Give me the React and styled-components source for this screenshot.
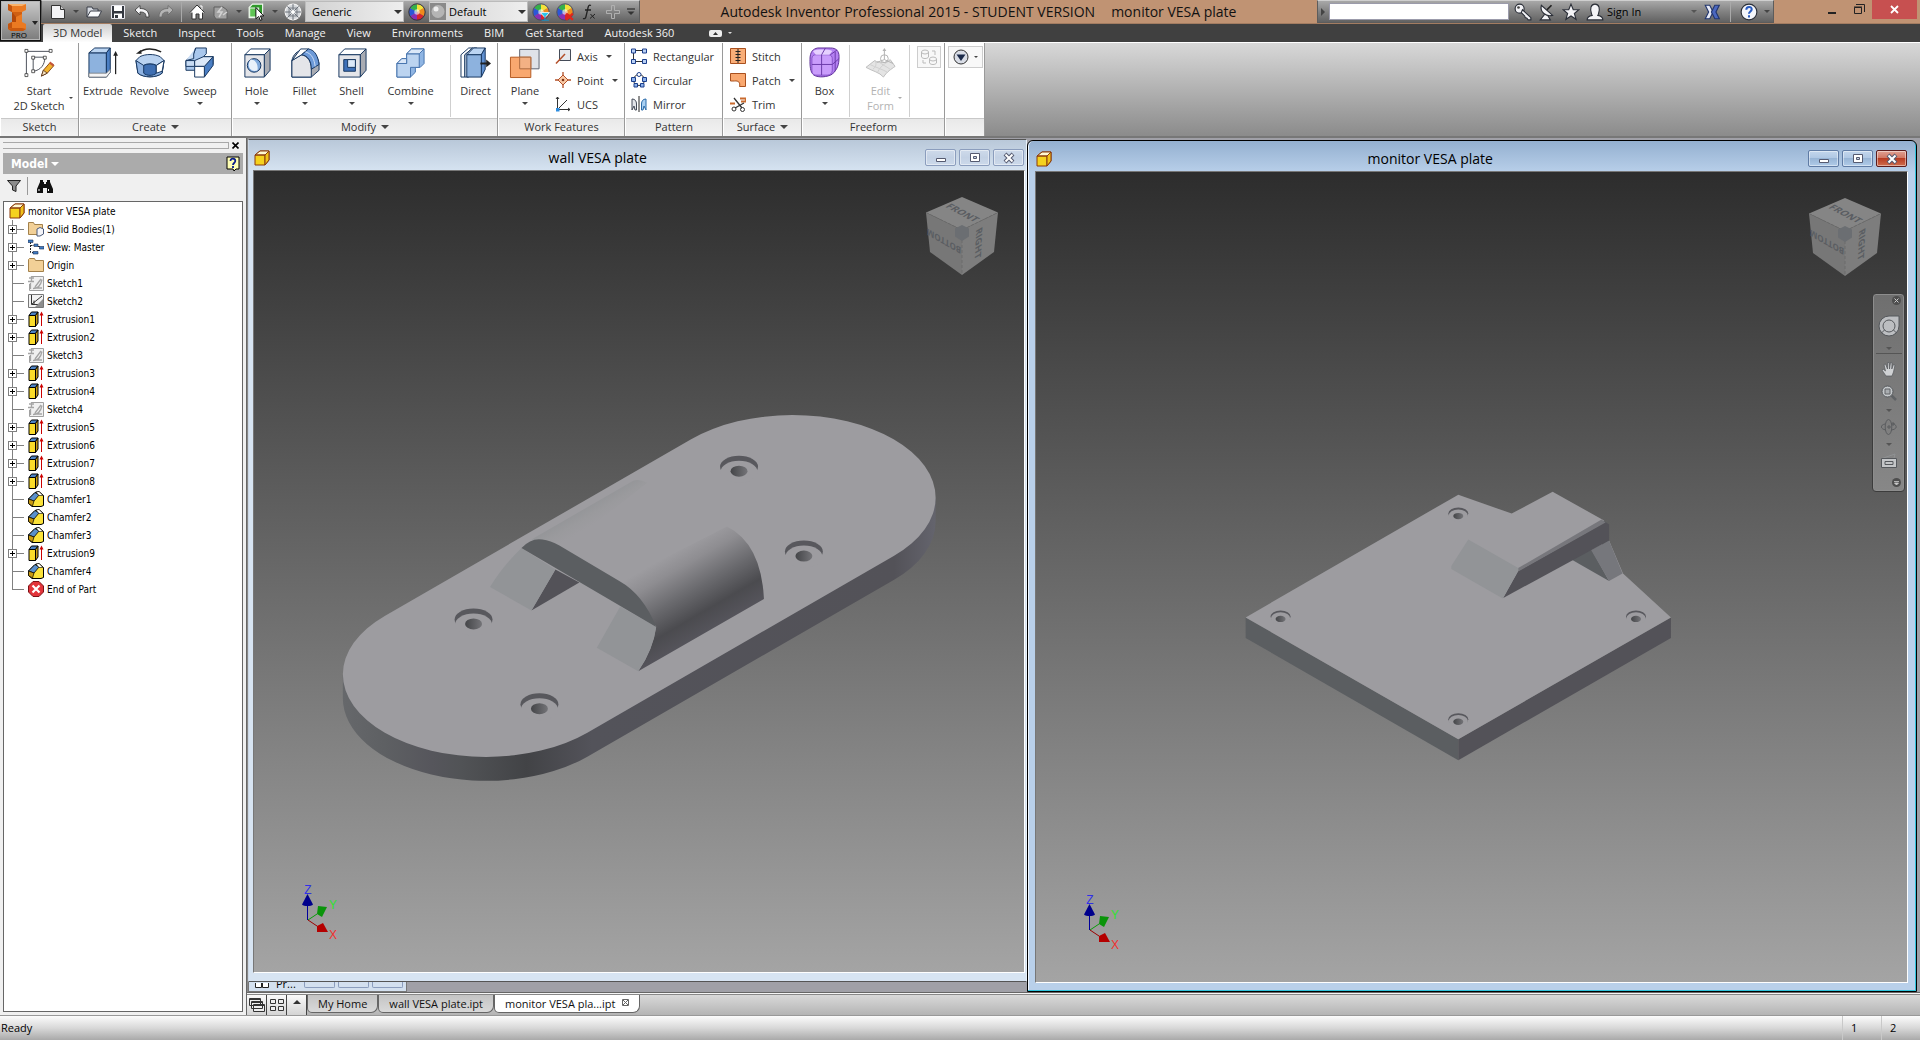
import React, { Component } from 'react';
import styled, { createGlobalStyle, css } from 'styled-components'

const uiFont = `"Open Sans", "Noto Sans", sans-serif`
const treeFont = `"DejaVu Sans Condensed", "DejaVu Sans", sans-serif`

const GlobalStyle = createGlobalStyle`
* { box-sizing: border-box; }
body {
  margin: 0;
  overflow: hidden;
  font-family: ${uiFont};
  font-size: 11px;
  color: #333;
}
button, select, input {
  font: inherit;
  color: inherit;
  margin: 0;
}
button {
  border: 0;
  padding: 0;
  background: none;
}
svg { display: block; flex: none; }
`

const Page = styled.div`
display: flex;
flex-direction: column;
min-height: 100vh;
background: #f0f0f0;
`

// ============================ header ============================

const Header = styled.header`
display: flex;
height: 42px;
background: #404040;
`

const AppButton = styled.button`
width: 41px;
height: 41px;
border: 1px solid #111;
background: linear-gradient(#c9c9c9, #a2a2a2 50%, #7c7c7c);
box-shadow: inset 0 0 0 1px #b5b5b5;
`

const HeaderRows = styled.div`
flex: 1;
min-width: 0;
`

const TitleBar = styled.div`
display: flex;
height: 24px;
background: #c09373;
border-bottom: 1px solid #a37c61;
`

const bevel = css`
background: linear-gradient(#a8a8a8, #828282 50%, #626262);
border: 1px solid #5c5c5c;
border-top-color: #cfcfcf;
`

const QuickAccess = styled.div`
${bevel}
display: flex;
align-items: center;
width: 599px;
padding-left: 4px;
`

const QuickButton = styled.button`
display: flex;
align-items: center;
justify-content: center;
flex: none;
width: ${props => props.$narrow ? 12 : 24}px;
height: 22px;
`

const QuickLine = styled.div`
width: 1px;
height: 20px;
margin: 0 ${props => props.$wide ? 6 : 3}px;
background: #a9a9a9;
`

const ComboBox = styled.label`
position: relative;
display: flex;
align-items: center;
flex: none;
width: 99px;
height: 21px;
margin-right: 1px;
background: linear-gradient(90deg, #d2d2d2, #eee);
border: 1px solid #bbb;
select {
  flex: 1;
  width: 100%;
  height: 19px;
  padding: 0 0 0 ${props => props.$swatch ? 3 : 6}px;
  appearance: none;
  border: 0;
  background: none;
  color: #000;
}
svg.arrow {
  position: absolute;
  right: 1px;
  pointer-events: none;
}
`

const AppTitle = styled.div`
flex: 1;
display: flex;
align-items: center;
justify-content: center;
gap: 16px;
font-size: 14px;
color: #111;
white-space: nowrap;
`

const InfoCenter = styled.div`
${bevel}
display: flex;
align-items: center;
width: 457px;
padding-left: 1px;
color: #000;
`

const SearchBox = styled.input`
width: 180px;
height: 17px;
margin: 0 2px 0 1px;
border: 1px solid #9b9bab;
background: #fff;
`

const SignIn = styled.button`
display: flex;
align-items: center;
justify-content: space-between;
width: 90px;
height: 22px;
margin-right: 3px;
`

const WindowButtons = styled.div`
display: flex;
justify-content: flex-end;
width: 146px;
padding-right: 3px;
`

const WindowButton = styled.button`
display: flex;
align-items: center;
justify-content: center;
width: 27px;
height: 19px;
`

const CloseButton = styled(WindowButton)`
width: 45px;
background: #c75050;
`

const TabRow = styled.nav`
display: flex;
gap: 1px;
height: 18px;
padding-left: 2px;
align-items: stretch;
`

const RibbonTab = styled.a`
padding: 0 10px;
line-height: 17px;
color: ${props => props.$active ? '#333' : '#f2f2f2'};
background: ${props => props.$active ? 'linear-gradient(#cfcfcf, #fdfdfd)' : 'none'};
border-radius: 2px 2px 0 0;
text-decoration: none;
white-space: nowrap;
`

const TabTools = styled.button`
display: flex;
align-items: center;
gap: 6px;
margin-left: 24px;
`

// ============================ ribbon ============================

const Ribbon = styled.section`
display: flex;
height: 94px;
border-top: 1px solid #fff;
background: linear-gradient(#d8d8d8, #8b8b8b);
`

const Panel = styled.div`
display: flex;
flex-direction: column;
width: ${props => props.$width}px;
background: #fff;
border-right: 1px solid #9a9a9a;
`

const PanelBody = styled.div`
display: flex;
flex: 1;
padding-left: ${props => props.$indent || 0}px;
`

const PanelTitle = styled.div`
display: flex;
align-items: center;
justify-content: center;
gap: 5px;
height: 18px;
margin-left: 1px;
padding-bottom: 2px;
border-top: 1px solid #c8c8c8;
background: linear-gradient(#e9e9e9, #f3f3f3);
line-height: 15px;
`

const BigTool = styled.button`
display: flex;
flex-direction: column;
align-items: center;
gap: 4px;
width: ${props => props.$width}px;
padding-top: 4px;
color: ${props => props.disabled ? '#b3b3b3' : 'inherit'};
`

const BigLabel = styled.span`
display: flex;
align-items: center;
gap: 4px;
padding-left: ${props => props.$side ? 8 : 0}px;
line-height: 15px;
`

const SmallTools = styled.div`
display: flex;
flex-direction: column;
padding-top: 1px;
`

const SmallTool = styled.button`
display: flex;
align-items: center;
gap: 6px;
height: 24px;
svg + span { margin-right: 2px; }
`

const ToolLine = styled.div`
width: 1px;
height: 72px;
margin: 2px ${props => props.$gap || 0}px 0;
background: #cfcfcf;
`

const BoxTool = styled.button`
display: flex;
align-items: center;
justify-content: center;
gap: 5px;
width: ${props => props.$width}px;
height: 22px;
margin: 3px 0 0 ${props => props.$left}px;
border: 1px solid #cdcdcd;
background: #f8f8f8;
`

// ============================ browser panel ============================

const Work = styled.main`
display: flex;
flex: 1;
min-height: 0;
border-top: 2px solid #777;
`

const Browser = styled.aside`
display: flex;
flex-direction: column;
width: 246px;
padding: 2px 3px 3px;
font-family: ${treeFont};
font-size: 10px;
color: #000;
`

const Grip = styled.div`
display: flex;
align-items: center;
height: 10px;
gap: 3px;
margin-bottom: 3px;
&::before {
  content: '';
  flex: 1;
  height: 5px;
  border: 1px solid #a8a8a8;
  border-left: 0;
}
button { width: 11px; }
`

const BrowserHead = styled.div`
display: flex;
align-items: center;
justify-content: space-between;
height: 21px;
padding: 0 3px 0 8px;
background: #ababab;
`

const BrowserMenu = styled.button`
display: flex;
align-items: center;
gap: 3px;
font-size: 12px;
font-weight: bold;
color: #fff;
`

const BrowserTools = styled.div`
display: flex;
align-items: center;
height: 27px;
padding: 0 4px 4px;
i {
  width: 1px;
  height: 18px;
  margin: 0 9px 0 6px;
  background: #999;
}
`

const Tree = styled.ul`
flex: 1;
margin: 0;
padding: 0;
border: 1px solid #666;
background: #fff;
list-style: none;
`

const TreeRow = styled.li`
display: flex;
align-items: center;
gap: 3px;
height: 18px;
padding-left: ${props => props.$root ? 5 : 0}px;
white-space: nowrap;
svg + svg { margin-left: 1px; }
`

// ============================ documents ============================

const Documents = styled.div`
display: flex;
flex-direction: column;
flex: 1;
min-width: 0;
border-left: 1px solid #666;
background: #f6f6f6;
`

const Mdi = styled.div`
display: flex;
flex: 1;
min-height: 0;
background: #a0a0a7;
border-bottom: 1px solid #666;
`

const LeftStack = styled.div`
display: flex;
flex-direction: column;
flex: 787 1 0;
min-width: 0;
padding-top: 1px;
border-left: 1px solid #888;
`

const DocWindow = styled.section`
display: flex;
flex-direction: column;
flex: ${props => props.$active ? '881 1 0' : '1'};
min-width: 0;
margin-right: ${props => props.$active ? 3 : 0}px;
margin-top: ${props => props.$active ? 2 : 0}px;
padding: 0 ${props => props.$active ? 8 : 1}px 8px ${props => props.$active ? 7 : 4}px;
border: 1px solid ${props => props.$active ? '#000' : '#555'};
border-left-color: ${props => props.$active ? '#000' : '#ccd8e6'};
border-right-color: ${props => props.$active ? '#000' : '#e8f0f8'};
border-radius: ${props => props.$active ? '6px 6px 0 0' : '0'};
background: ${props => props.$active
  ? 'linear-gradient(#94b0d0, #b9d0ea 32px, #b9d0ea)'
  : 'linear-gradient(#b9c8d9, #d7e4f2 32px, #d7e4f2)'};
box-shadow: ${props => props.$active ? 'inset -1px -1px 0 #2fc3dc, inset 1px 0 0 #eef6ff' : 'none'};
`

const DocTitle = styled.div`
display: flex;
align-items: center;
height: 30px;
gap: 3px;
padding: 5px 1px 0 1px;
color: #000;
font-size: 14px;
h2 {
  flex: 1;
  margin: 0;
  text-align: center;
  font-size: inherit;
  font-weight: normal;
}
`

const DocButton = styled.button`
display: flex;
align-items: center;
justify-content: center;
width: 31px;
height: 17px;
border: 1px solid ${props => props.$red ? '#5c1c1c' : props.$dark ? '#5f7ba4' : '#8b9dbd'};
border-radius: 2px;
background: ${props => props.$red
  ? 'linear-gradient(#e0a193, #d17864 45%, #b83c22 50%, #cf6e4e)'
  : props.$dark
    ? 'linear-gradient(#c3d6ec, #b0c8e4 45%, #98b5d6 50%, #b0cbe8)'
    : 'linear-gradient(#cedaea, #c3d1e4 50%, #ccd9ea)'};
box-shadow: inset 0 0 0 1px rgba(255, 255, 255, .45);
`

const Viewport = styled.div`
position: relative;
flex: 1;
min-height: 0;
border: 1px solid #777;
border-right-color: #fff;
border-bottom-color: #fff;
background: linear-gradient(#2d2d2d, #a4a4a4);
`

const Scene = styled.svg`
position: absolute;
inset: 0;
width: 100%;
height: 100%;
`

const Overlay = styled.div`
position: absolute;
${props => props.$place}
`

const NavBar = styled.div`
position: absolute;
top: 121px;
right: 2px;
display: flex;
flex-direction: column;
width: 33px;
padding: 0 1px;
border-radius: 4px;
border: 1px solid #3c3c3c;
background: linear-gradient(#6f6f6f, #878787);
box-shadow: inset 0 0 0 1px #8d8d8d;
hr {
  width: 26px;
  margin: 2px auto 3px;
  border: 0;
  border-top: 1px solid #555;
}
`

const NavButton = styled.button`
display: flex;
align-items: center;
justify-content: ${props => props.$end ? 'flex-end' : 'center'};
height: ${props => props.$height || 24}px;
padding-right: ${props => props.$end ? 2 : 0}px;
`

const PeekWindow = styled.div`
display: flex;
align-items: flex-end;
gap: 3px;
width: 159px;
height: 10px;
padding: 0 3px 3px 6px;
border: 1px solid #777;
border-top: 0;
background: #d3e0ef;
color: #000;
overflow: hidden;
span {
  flex: 1;
  padding-left: 4px;
  line-height: 8px;
}
i {
  width: 31px;
  height: 6px;
  border: 1px solid #8b9dbd;
  border-top: 0;
  border-radius: 0 0 2px 2px;
}
`

const DocTabs = styled.nav`
display: flex;
height: 21px;
margin-top: 1px;
border-top: 1px solid #888;
background: linear-gradient(#d9d9d9, #b4b4b4);
`

const LayoutButton = styled.button`
display: flex;
align-items: center;
justify-content: center;
width: 20px;
height: 20px;
border-right: 1px solid #444;
background: linear-gradient(#fafafa, #d4d4d4);
`

const DocTab = styled.a`
display: flex;
gap: 7px;
height: 18px;
padding: 0 10px;
border: 1px solid #666;
border-top: 0;
border-radius: 0 0 7px 5px;
line-height: 17px;
color: #111;
text-decoration: none;
white-space: nowrap;
background: ${props => props.$active ? '#fff' : 'linear-gradient(#c4c4c4, #d9d9d9)'};
svg { margin-top: 4px; }
`

const StatusBar = styled.footer`
display: flex;
align-items: stretch;
height: 25px;
border-top: 1px solid #999;
background: linear-gradient(#fcfcfc, #d8d8d8 50%, #a9a9a9);
color: #000;
line-height: 24px;
span { flex: 1; padding-left: 1px; }
b {
  width: 39px;
  padding-left: 8px;
  border-left: 1px solid #c9c9c9;
  font-weight: normal;
}
`

// ============================ small drawings ============================

const Arrow = ({ w = 6, color = '#444', className }) => (
  <svg className={className} width={w} height={w / 2} viewBox="0 0 6 3"><path d="M0 0h6L3 3z" fill={color} /></svg>
)

const ComboArrow = () => <Arrow className="arrow" w={8} color="#333" />

const Svg16 = ({ children, size = 16 }) => (
  <svg width={size} height={size} viewBox="0 0 16 16" fill="none">{children}</svg>
)

const Wheel = ({ mark }) => (
  <Svg16 size={18}>
    <path d="M8 8V1A7 7 0 0 1 14 4.5z" fill="#f4e23a" />
    <path d="M8 8l6-3.5A7 7 0 0 1 14 11.5z" fill="#f08a1c" />
    <path d="M8 8l6 3.5A7 7 0 0 1 8 15z" fill="#d8242c" />
    <path d="M8 8v7A7 7 0 0 1 2 11.5z" fill="#8a2fb4" />
    <path d="M8 8l-6 3.5A7 7 0 0 1 2 4.5z" fill="#2c56d8" />
    <path d="M8 8L2 4.5A7 7 0 0 1 8 1z" fill="#35b04a" />
    <circle cx="8" cy="8" r="7.300" stroke={mark ? '#4a4a5a' : '#2d2d36'} strokeWidth=".8" />
    <circle cx="8" cy="8" r="2.400" fill="#fff" opacity=".6" />
    {mark === 'down' && <><path d="M7.500 8.500h8l-4 4.500z" fill="#25c5ec" stroke="#fff" strokeWidth=".7" /><path d="M11.500 12v3.500M8.500 15.300h6.500" stroke="#1b8fc0" /></>}
    {mark === 'x' && <path d="M9 9.500l6 5.500M15 9.500l-6 5.500" stroke="#e0261c" strokeWidth="2" />}
  </Svg16>
)

const quickIcons = {
  new: <Svg16><path d="M1.500 1.500h9l4 4v9h-13z" fill="#f4f4f6" stroke="#333" /><path d="M10.500 1.500v4h4" fill="#ccc" stroke="#333" /></Svg16>,
  open: <Svg16><path d="M1 13V3h5l1 2h5v3" fill="#d5d9e0" stroke="#3a3f48" /><path d="M1 13l3.500-6H15.500l-3 6z" fill="#fafbfd" stroke="#3a3f48" /></Svg16>,
  save: <Svg16><path d="M1.500 1.500h13v13h-13z" fill="#33373f" stroke="#e8e8ee" /><path d="M4 2h8v5H4zM4 9.500h8V14H4z" fill="#fff" /><path d="M5 11h3v3H5z" fill="#33373f" /></Svg16>,
  undo: <Svg16><path d="M1 6l5-4.500v3c5 0 9 2 9 8.500h-3c0-4-2-5-6-5v3z" fill="#f4f4f6" stroke="#333" strokeWidth=".8" /></Svg16>,
  redo: <Svg16><path d="M15 6l-5-4.500v3c-5 0-9 2-9 8.500h3c0-4 2-5 6-5v3z" fill="#b5b5b5" stroke="#6a6a6a" strokeWidth=".8" /></Svg16>,
  home: <Svg16><path d="M3 8v7h4v-5h3v5h3.500V8" fill="#fff" stroke="#333" /><path d="M1 8.500L8 1l7.500 7.500" fill="#fff" stroke="#333" /><path d="M11 2h2v3.500" stroke="#fff" /></Svg16>,
  update: <Svg16><path d="M1 3h9l4 3v9H3L1 12z" fill="#a2a2a2" stroke="#5f5f5f" /><path d="M9 3l-4 5h4l-3 5M14 8l-4 3" stroke="#d2d2d2" strokeWidth="1.500" /></Svg16>,
  pick: <Svg16 size={18}><path d="M1 4l3-3h9v9l-3 3H1z" fill="#2f9a2a" stroke="#eef8ed" strokeWidth="1" /><path d="M1.500 4.500h8v8h-8z" fill="#5fc455" stroke="#f2faf1" strokeWidth=".9" /><path d="M7 4v10l2.500-2 1.500 3.500 1.500-.8L11 11.500h3z" fill="#fff" stroke="#000" strokeWidth=".8" /></Svg16>,
  ball: <Svg16 size={18}><circle cx="8" cy="8" r="7" fill="#d4d7db" stroke="#f2f2f2" /><path d="M8 1v14M1 8h14M3 3l10 10M13 3L3 13" stroke="#5f656d" strokeWidth=".8" /><path d="M4.500 4.500h7v7h-7z" stroke="#70767e" strokeWidth=".8" /><circle cx="8" cy="8" r="1.800" fill="#fff" /></Svg16>,
  plus: <Svg16><path d="M6.500 1.500h3v5h5v3h-5v5h-3v-5h-5v-3h5z" stroke="#b0b0b0" /></Svg16>,
  more: <svg width="8" height="8" viewBox="0 0 8 8"><path d="M0 1h8" stroke="#333" strokeWidth="1.300" /><path d="M.5 3.500h7L4 7z" fill="#333" /></svg>,
}

const InvLogo = () => (
  <svg width="39" height="39" viewBox="0 0 39 39">
    <path d="M7 3h18v6l-4 2v10l4 2v5l-3 2H10l-3-2v-5l4-2V11L7 9z" fill="#ea7a22" />
    <path d="M7 3h18l-4 2H11z" fill="#f9b269" />
    <path d="M7 3l4 2v6L7 9zM7 23l4-2v6l-4 1z" fill="#c2540e" />
    <path d="M11 11l4 2v8l-4 0z" fill="#b3480a" />
    <path d="M11 11h10v2l-6 3z" fill="#cf5f12" />
    <path d="M7 28l4-1h10l4 1-3 2H10z" fill="#c9590f" />
    <path d="M31 20h6l-3 4z" fill="#222" />
    <text x="18" y="37" fontSize="8" textAnchor="middle" fill="#000">PRO</text>
  </svg>
)

const Glyph = ({ kind }) => {
  const line = { fill: '#f4f4f7', stroke: '#2b2f38', strokeWidth: 1 }
  return (
    <Svg16 size={18}>
      {kind === 'key' && <><circle cx="5" cy="5" r="4" {...line} /><path d="M7.500 6L15 13v2h-2.500l-1-1.500-1.500-.5-.5-1.500-3-3z" {...line} /><circle cx="4" cy="4" r="1.200" fill="#444" /></>}
      {kind === 'dish' && <><path d="M6 10l-4 5h9l-3-5" {...line} /><path d="M3 2c-1.500 6 4 10.500 10 9z" {...line} /><path d="M8 6l4-4" stroke="#222" strokeWidth="1.500" /></>}
      {kind === 'star' && <path d="M8 1l2 5h5l-4 3.300 1.500 5.200L8 11.500l-4.500 3L5 9.300 1 6h5z" {...line} />}
      {kind === 'user' && <path d="M1 15c0-3 2-3.500 4.500-4l-.5-1C3 5 4.500 1 8 1s5 4 3 9l-.5 1c2.500.5 4.500 1 4.500 4z" {...line} />}
      {kind === 'x' && <><path d="M2 2h4l3 6-3 6H2l3-6z" fill="#e8ebf6" stroke="#22366e" /><path d="M14.500 2h-4L7.500 8l3 6h4l-3-6z" fill="#4a67c0" stroke="#22366e" /></>}
      {kind === 'help' && <><circle cx="8" cy="8" r="7" fill="#f4f6fb" stroke="#2b2f38" /><path d="M5.600 6c0-3.300 5-3.200 4.800-.3C10.300 7.500 8 7.600 8 9.600M8 10.800v2" stroke="#2a5cc0" strokeWidth="1.800" /></>}
    </Svg16>
  )
}

// big ribbon icons share a 32px grid
const ink = '#16365f'
const blue = '#8db2de'

const bigIcons = {
  sketch: <>
    <path d="M3.500 29V4.500h25M10.500 25V10.500h12M10.500 25c8-1 12-7 12-14" stroke="#4a4f5a" />
    <path d="M2 2.500h3v3H2zM27 2.500h3v3h-3zM2 27.500h3v3H2zM9 9.500h3v3H9zM21 9.500h3v3h-3zM9 23.500h3v3H9z" fill="#fff" stroke="#333" strokeWidth=".8" />
    <path d="M19 30l2-6 7-8 4 3-7 8z" fill="#f2b431" stroke="#8a4b1a" /><path d="M19 30l2-6 4 3z" fill="#f7e2c0" stroke="#4a2a12" strokeWidth=".8" /><path d="M27 17l4 3 1-2-4-3z" fill="#c4553a" />
  </>,
  extrude: <>
    <path d="M2 6h18v25H2z" fill={blue} stroke={ink} /><path d="M2 6l6-5h16l-4 5z" fill="#bcd5f2" stroke={ink} />
    <path d="M20 6l4-5v25l-4 5z" fill="#4b7fc4" stroke={ink} /><path d="M2 27h18l4-4v3l-4 5H2z" fill="#f4f4f6" stroke="#777" strokeWidth=".8" />
    <path d="M29.500 28V7" stroke="#222" strokeWidth="1.300" /><path d="M27 9l2.500-5L32 9z" fill="#222" />
  </>,
  revolve: <>
    <path d="M5 6c6-5 15-5 23-1" stroke="#222" strokeWidth="1.500" /><path d="M2 7l5-4 1 4z" fill="#222" />
    <path d="M2 14l4-4c6-3 15-3 21 0l4 4-2 13c-6 5-19 5-25 0z" fill="#b9d2f0" stroke={ink} />
    <path d="M2 14l8 5c3-2 10-2 13 0l8-5-2 13c-6 5-19 5-25 0z" fill="#8fb3e2" stroke={ink} />
    <path d="M10 19c3-2 10-2 13 0v8c-3 3-10 3-13 0z" fill="#3f6fb2" stroke={ink} />
    <path d="M31 14l-8 5v8l6-2z" fill="#fff" stroke={ink} />
  </>,
  sweep: <>
    <path d="M2 14l8-7 2-6h11v6l-3 3h10v8l-7 6H2z" fill="#a9c7ec" stroke={ink} />
    <path d="M2 14h9v6H2zM12 1l-2 6v5l-8 2" fill="#c8dcf4" stroke={ink} />
    <path d="M30 10v9l-9 12V20z" fill="#4b7fc4" stroke={ink} />
    <path d="M11 14l9-4h10l-9 10H11z" fill="#dbe8f8" stroke={ink} />
    <path d="M11 20h10v11H11z" fill="#fff" stroke={ink} />
  </>,
  hole: <>
    <path d="M4 8l6-6h20l-6 6z" fill="#fff" stroke={ink} /><path d="M24 8l6-6v22l-6 7z" fill="#a9acb3" stroke={ink} />
    <path d="M4 8h20v23H4z" fill="#e4e5e9" stroke={ink} /><circle cx="13.500" cy="19" r="7" fill="#7fa9dc" stroke={ink} /><path d="M10 13c5 0 8 5 7 11-7 3-12-5-7-11z" fill="#e8f1fb" />
  </>,
  fillet: <>
    <path d="M3 31V14C4 8 9 3 15 3h5c7 2 10 9 11 14v7l-8 7z" fill="#a9acb3" stroke={ink} />
    <path d="M3 31V14l10-6c6 1 10 7 10 14v9z" fill="#e4e5e9" stroke={ink} />
    <path d="M3 14l9-12h8l-7 6z" fill="#fff" stroke={ink} /><path d="M13 8l7-6c7 1 10 8 11 16l-8 5c0-8-3-14-10-15z" fill="#6d9ad8" stroke={ink} />
    <path d="M17 5c7 2 9 8 10 15" stroke="#cfe0f5" />
  </>,
  shell: <>
    <path d="M3 8l6-6h22l-6 6z" fill="#fff" stroke={ink} /><path d="M25 8l6-6v22l-6 7z" fill="#a9acb3" stroke={ink} />
    <path d="M3 8h22v23H3z" fill="#e4e5e9" stroke={ink} /><path d="M8 13h12v12H8z" fill="#3e70b8" stroke={ink} /><path d="M12 13h8v8h-8z" fill="#dbe8f8" stroke={ink} />
  </>,
  combine: <>
    <path d="M2 17l5-5h5V7l5-5h13v15l-4 4h-5v5l-5 5H2z" fill="#8fb5e3" stroke="#4674ad" />
    <path d="M2 17h10V7h13v14h-9v10H2z" fill="#bcd4f0" stroke="#4674ad" /><path d="M12 7l5-5h13l-5 5z" fill="#dbe8f8" stroke="#4674ad" /><path d="M2 17l5-5h5v5z" fill="#dbe8f8" stroke="#4674ad" />
  </>,
  direct: <>
    <path d="M1 8l8-7h4L5 8v23H1z" fill="#fff" stroke={ink} /><path d="M5 8l8-7h4L9 8v23H5z" fill="#dfe9f6" stroke={ink} />
    <path d="M7 8l7-7h12l-4 7z" fill="#bcd5f2" stroke={ink} /><path d="M22 8l4-7v22l-4 8z" fill="#5f8fd0" stroke={ink} /><path d="M7 8h15v23H7z" fill={blue} stroke={ink} />
    <path d="M21 17h7" stroke="#222" strokeWidth="2" /><path d="M27 13l5 4-5 4z" fill="#222" />
  </>,
  plane: <>
    <path d="M11 2.500h20v20H11z" fill="#dfe2e8" stroke="#5b6170" /><path d="M1.500 10.500h21v21h-21z" fill="#f9a86f" stroke="#b45a22" /><path d="M11 10.500h11.500v12H11z" fill="#f3b184" stroke="#a9683f" />
  </>,
  box: <>
    <path d="M1 13c0-8 3-11 8-12h13c6 0 9 3 9 9 0 9-2 13-7 18-5 3-14 4-19 1-4-3-4-10-4-16z" fill="#b480f2" stroke="#5d3096" />
    <path d="M3 12c0-3 2-4 4-4h13c3 0 4 2 4 4v12c0 3-2 5-5 5H7c-3 0-4-2-4-5z" fill="#c99cfb" stroke="#7a46bd" strokeWidth=".8" />
    <path d="M4 4c4-2 16-2 20 0l-3 4H7z" fill="#e6d0ff" />
    <path d="M13 8v21M3 18h21l7-6M13 8l4-7M22 8l7-5M27 5v20" stroke="#6a3aa8" />
  </>,
  edit: <>
    <path d="M1 21l9-7c5 3 12 3 16-1l5 7c-4 3-8 5-12 11-4-5-11-6-18-10z" fill="#e4e4e4" stroke="#bdbdbd" />
    <path d="M5 18c6 3 13 5 18 8M14 15c3 3 8 5 12 8M24 15c-5 3-9 6-11 11M10 14c0 0 4 5-2 9" stroke="#cfcfcf" />
    <path d="M20 13V3M20 13l9 4M20 13l-8 3" stroke="#b3b3b3" /><circle cx="20" cy="12" r="4" stroke="#b3b3b3" /><path d="M18 4l2-3 2 3z" fill="#b3b3b3" />
  </>,
}

const BigIcon = ({ name }) => <svg width="32" height="32" viewBox="0 0 33 33" fill="none">{bigIcons[name]}</svg>

const smallIcons = {
  axis: <><path d="M4.500 1.500h11v11h-11z" fill="#e6e8ec" stroke="#444b58" /><path d="M1 15.500L10 6" stroke="#b3502a" strokeWidth="1.500" /></>,
  point: <><path d="M8 3l5 5-5 5-5-5z" fill="#f9c9a4" stroke="#b3502a" /><path d="M8 0v4M8 12v4M0 8h4M12 8h4" stroke="#b3502a" strokeWidth="1.300" /><circle cx="8" cy="8" r="1.300" fill="#7a2f12" /></>,
  ucs: <><path d="M2.500 14V1M2.500 13.500H15M3 13L12 4M1 3l1.500-2L4 3M13 12l2 1.500-2 1.500" stroke="#333" /><path d="M1 12h3.500v3.500H1z" fill="#2c8de0" /></>,
  rect: <><path d="M5 2.500h7M2.500 5v7M5 13.500h7" stroke="#333" /><path d="M.5 1h4v4h-4zM11.500 1h4v4h-4zM.5 11.500h4v4h-4zM11.500 11.500h4v4h-4z" fill="#b9d0f4" stroke="#1c3f8c" /></>,
  circ: <><circle cx="8" cy="8" r="5.500" stroke="#333" /><circle cx="8" cy="2.500" r="2" fill="#fff" stroke="#1c3f8c" /><path d="M.5 5.500h4v4h-4zM11.500 5.500h4v4h-4zM3 11.500h3.500V15H3zM9.500 11.500H13V15H9.500z" fill="#8db2ea" stroke="#1c3f8c" /></>,
  mirror: <><path d="M1 3c3 0 4.500 2 4.500 5v6H4l-1-4-2 4z" fill="#e3e5ea" stroke="#444b58" /><path d="M15 3c-3 0-4.500 2-4.500 5v6H12l1-4 2 4z" fill="#a9d0f2" stroke="#2a6aa8" /><path d="M8 0v16" stroke="#222" /></>,
  stitch: <><path d="M.5 .5h15v15H.5z" fill="#f9ae78" stroke="#a9501e" /><path d="M8 1v14M5.500 3.500h5M5.500 6.500h5M5.500 9.500h5M5.500 12.500h5" stroke="#222" /></>,
  patch: <path d="M.5 1.500h15v13h-6c1-4-1-6-5-5.500h-4z" fill="#f9a86f" stroke="#a9501e" />,
  trim: <><path d="M0 7.500h5M10 2.500h6v3h-5" stroke="#c96a2e" strokeWidth="2.200" /><path d="M4 2l8 10M14 7L5 12" stroke="#333" strokeWidth="1.300" /><circle cx="4" cy="13" r="2" stroke="#333" /><circle cx="12.500" cy="13.500" r="2" stroke="#333" /></>,
}

const SmallIcon = ({ name }) => <Svg16>{smallIcons[name]}</Svg16>

// icons of the model browser
const treeIcons = {
  part: <><path d="M1 5l5-4h9v9l-4 5H1z" fill="#f5d21e" stroke="#8a3a0c" /><path d="M1 5l5-4h9l-4 4z" fill="#fff8d2" stroke="#8a3a0c" /><path d="M11 5v10M1 5h10" stroke="#8a3a0c" /><path d="M11 5l4-4v9l-4 5z" fill="#f0c21a" stroke="#8a3a0c" /></>,
  folder: <path d="M.5 14.500v-12l1-1h5l1 2h8v11z" fill="#f2d097" stroke="#a3814b" />,
  bodies: <><path d="M.5 13.500v-12h5l1 2h8v10z" fill="#f2d097" stroke="#a3814b" /><path d="M9 8l3-1.500 3.500 1.500v5L12 15H9z" fill="#f4f4f8" stroke="#4a5a7a" /></>,
  view: <><path d="M2.500 3v10.500H6M2.500 6.500H6M10 7.500h2" stroke="#222" strokeDasharray="2 1" /><path d="M0 1h5v2.500H0zM6 5h4v2.500H6zM11.500 7.500H16V10h-4.500zM5 12.500h5V15H5z" fill="#3f7cc4" stroke="#1a2e50" strokeWidth=".6" /></>,
  sketch: <><path d="M3.500 1.500h12v14H1.500V9" fill="#f0f0f0" stroke="#a0a0a0" /><path d="M3.500 1v6M1 3h5M0 6.500h6M2.500 8v6M5 13.500c5 0 8-4 9-9M7 12l6-8M6 13h8" stroke="#a5a5a5" strokeWidth="1.300" /></>,
  sketch2: <><path d="M.5 1.500h15v13H.5z" fill="#f2f2f2" stroke="#777" /><path d="M3.500 2v9.500H15M4 11L14 3M6 7.500v4" stroke="#333" /><path d="M7 14l8-8v8z" fill="#8d8d8d" /></>,
  extrusion: <><path d="M1 4.500h6.500v11H1z" fill="#fbdc2a" stroke="#000" /><path d="M1 4.500L3.500 1H10L7.500 4.500z" fill="#4d83c4" stroke="#000" /><path d="M7.500 4.500L10 1v11l-2.500 3.500z" fill="#c79a12" stroke="#000" /><path d="M13.500 15V3" stroke="#c00" /><path d="M11.500 4.500l2-4 2 4z" fill="#c00" /></>,
  chamfer: <><path d="M.5 8L7 1.500l4-1 4.500 4v10L13 15.500H4l-3.500-3z" fill="#fbe23a" stroke="#000" /><path d="M.5 8L7 1.500l4 2.500-5 6z" fill="#5a90cc" stroke="#000" strokeWidth=".8" /><path d="M8 1l3-.5 4 4h-4z" fill="#fff" stroke="#000" strokeWidth=".6" /><path d="M.5 8L6 10l-1.500 5-4-2.500z" fill="#c99a12" stroke="#000" strokeWidth=".7" /></>,
  end: <><path d="M5 .5h6L15.500 5v6L11 15.500H5L.5 11V5z" fill="#e2343a" stroke="#7c1015" /><path d="M4.500 4.500l7 7M11.500 4.500l-7 7" stroke="#fff" strokeWidth="2.200" /></>,
}

const TreeIcon = ({ name }) => <Svg16>{treeIcons[name]}</Svg16>

const Branch = ({ plus, last }) => (
  <svg width="20" height="18" viewBox="0 0 20 18" fill="none" stroke="#808080" shapeRendering="crispEdges">
    <path d={last ? 'M8.500 0v9.500' : 'M8.500 0v18'} />
    <path d="M9 9.500h11" />
    {plus && <><path d="M4.500 5.500h8v8h-8z" fill="#fff" /><path d="M6 9.500h5M8.500 7v5" stroke="#000" /></>}
  </svg>
)

const MinIcon = () => <svg width="12" height="12" viewBox="0 0 12 12"><path d="M1.500 6.500h9v3h-9z" fill="#fff" stroke="#555a70" /></svg>
const MaxIcon = () => <svg width="12" height="12" viewBox="0 0 12 12"><path d="M1.500 1.500h9v8h-9z" fill="#fff" stroke="#555a70" /><path d="M4.500 4.500h3v2h-3z" fill="#c9d6e8" stroke="#555a70" /></svg>
const XIcon = () => <svg width="12" height="12" viewBox="0 0 12 12"><path d="M2 2l8 8M10 2l-8 8" stroke="#555a70" strokeWidth="4" /><path d="M2.500 2.500l7 7M9.500 2.500l-7 7" stroke="#fff" strokeWidth="2" /></svg>

const ViewCube = () => (
  <svg width="72" height="78" viewBox="0 0 72 78" fontWeight="bold" fontSize="10" textAnchor="middle">
    <path d="M36 0l36 15.500L36 33 0 15.500z" fill="#858585" />
    <path d="M0 15.500L36 33v45L4 55z" fill="#777" />
    <path d="M72 15.500L36 33v45l32-23z" fill="#7d7d7d" />
    <path d="M0 15.500L36 33l36-17.500M36 33v45" stroke="#6c6c6c" strokeDasharray="3 2" fill="none" />
    <path d="M36 28l7 3.500v8L36 44l-7-4.500v-8z" fill="#6b6e72" />
    <g fill="#5a5d62">
      <text y="3" transform="matrix(.87 .45 -.85 .5 36 16)">FRONT</text>
      <text y="4" fontSize="9" transform="matrix(-.87 -.5 .05 -1 18 45)">BOTTOM</text>
      <text y="4" transform="matrix(-.05 1 -.87 .5 53 46)">RIGHT</text>
    </g>
  </svg>
)

const Triad = () => (
  <svg width="40" height="60" viewBox="0 0 40 60" fontSize="12" textAnchor="middle" fontFamily="Liberation Sans, sans-serif">
    <path d="M7.500 37V20" stroke="#00009c" /><path d="M2 21.500L7.500 11 13 21.500c-2 2-9 2-11 0z" fill="#00008c" />
    <path d="M8 37l9-6" stroke="#0a9c0a" /><path d="M18 23l9 1-5 10-5-3z" fill="#0a940a" />
    <path d="M8 37l9 6" stroke="#9c0000" /><path d="M17 49v-6l6-3 5 9z" fill="#b40000" />
    <text x="8" y="11" fill="#3030e8">Z</text>
    <text x="33" y="26" fill="#30e030">Y</text>
    <text x="33" y="56" fill="#f03030">X</text>
  </svg>
)

const wallHoles = [[740, 467], [805, 552], [474, 620], [540, 705]]

const WallPlate = () => (
  <Scene viewBox="254 171 772 802" role="img" aria-label="wall VESA plate model">
    <defs>
      <linearGradient id="rim" gradientUnits="userSpaceOnUse" x1="343" y1="0" x2="937" y2="0">
        <stop offset="0" stopColor="#66686b" /><stop offset=".07" stopColor="#5e6063" />
        <stop offset=".15" stopColor="#56565c" /><stop offset=".2" stopColor="#515356" />
        <stop offset=".31" stopColor="#424346" /><stop offset=".42" stopColor="#53535a" />
        <stop offset=".93" stopColor="#535258" /><stop offset="1" stopColor="#64646d" />
      </linearGradient>
      <linearGradient id="round" gradientUnits="userSpaceOnUse" x1="620" y1="584" x2="663" y2="658">
        <stop offset="0" stopColor="#9d9ca0" /><stop offset=".2" stopColor="#8e8d91" />
        <stop offset=".5" stopColor="#6a6a6e" /><stop offset=".78" stopColor="#4b4b4f" />
        <stop offset="1" stopColor="#55545b" />
      </linearGradient>
      <linearGradient id="soft" gradientUnits="userSpaceOnUse" x1="584" y1="508" x2="594" y2="525">
        <stop offset="0" stopColor="#949598" /><stop offset=".5" stopColor="#9a9a9d" /><stop offset="1" stopColor="#9d9ca0" />
      </linearGradient>
      <linearGradient id="bore">
        <stop offset="0" stopColor="#444548" /><stop offset="1" stopColor="#747478" />
      </linearGradient>
    </defs>
    <path d="M343 675V699A143.500 82.800 0 0 0 588 757.500L895 580.500A143.500 82.800 0 0 0 937 522V498z" fill="url(#rim)" />
    <path d="M385 616.500L692 439.500A143 82.500 0 0 1 895 556.500L588 733.500A143 82.500 0 0 1 385 616.500z" fill="#9d9ca0" />
    {wallHoles.map(([x, y]) => (
      <g key={x}>
        <ellipse cx={x} cy={y} rx="19" ry="11" fill="#58585d" />
        <ellipse cx={x} cy={y + 5} rx="18.500" ry="11" fill="#9d9ca0" />
        <ellipse cx={x} cy={y + 4.500} rx="8.500" ry="5.500" fill="url(#bore)" />
      </g>
    ))}
    <path d="M532 540L634 481q6-2 14 2L566 548z" fill="url(#soft)" />
    <path d="M556 570l24 13-48 28z" fill="#535258" />
    <path d="M522 548.500l34 21.500-24 41-41.500-23.500q12-20 31.500-39z" fill="#929497" />
    <path d="M620 581.500L728 527Q762 544 765 599.500L639 672Q654 650 657 627z" fill="url(#round)" />
    <path d="M621 607l36 20.500Q654 650 639 672l-41.500-23.500z" fill="#929497" />
    <path d="M522 548.500Q532 538 543 540 551 541 560 546L620 581.500Q644 595 657 627.500z" fill="#5b5e61" />
  </Scene>
)

const monitorHoles = [[1459, 514], [1281, 617], [1637, 617], [1459, 720]]

const MonitorPlate = () => (
  <Scene viewBox="1036 172 872 811" role="img" aria-label="monitor VESA plate model">
    <path d="M1246 618l213 122v21l-213-122.500z" fill="#5b5e61" />
    <path d="M1672 618l-213 122v21l213-122.500z" fill="#535258" />
    <path d="M1246 618l213-123 53.500 19 41-22L1605 521l5 20 14 33 48 44-213 122z" fill="#9d9ca0" />
    {monitorHoles.map(([x, y]) => (
      <g key={x + y}>
        <ellipse cx={x} cy={y} rx="10" ry="6" fill="#58585d" />
        <ellipse cx={x} cy={y + 1.800} rx="9.600" ry="6" fill="#9d9ca0" />
        <ellipse cx={x} cy={y + 2.500} rx="5" ry="3.200" fill="url(#bore)" />
      </g>
    ))}
    <path d="M1571.500 559.500l21-9.500 17.500 31.500z" fill="#5b5e61" />
    <path d="M1592 550.500l18-9.500 13.500 33-13.500 7.500z" fill="#76777c" />
    <path d="M1605 521l5 4v16l-7 4-4-21z" fill="#5b5e61" />
    <path d="M1519 571.500l87-49 4 2.500v16l-106 57.500z" fill="#535258" />
    <path d="M1519 568.500l83.500-48.500 4 3-87.500 49z" fill="#77777c" />
    <path d="M1469 540l50 28.500v3l-15.500 27.500-51.500-29.500v-3z" fill="#929497" />
  </Scene>
)

// ============================ page parts ============================

const tabs = ['3D Model', 'Sketch', 'Inspect', 'Tools', 'Manage', 'View', 'Environments', 'BIM', 'Get Started', 'Autodesk 360']

const tree = [
  ['bodies', 'Solid Bodies(1)', true],
  ['view', 'View: Master', true],
  ['folder', 'Origin', true],
  ['sketch', 'Sketch1'],
  ['sketch2', 'Sketch2'],
  ['extrusion', 'Extrusion1', true],
  ['extrusion', 'Extrusion2', true],
  ['sketch', 'Sketch3'],
  ['extrusion', 'Extrusion3', true],
  ['extrusion', 'Extrusion4', true],
  ['sketch', 'Sketch4'],
  ['extrusion', 'Extrusion5', true],
  ['extrusion', 'Extrusion6', true],
  ['extrusion', 'Extrusion7', true],
  ['extrusion', 'Extrusion8', true],
  ['chamfer', 'Chamfer1'],
  ['chamfer', 'Chamfer2'],
  ['chamfer', 'Chamfer3'],
  ['extrusion', 'Extrusion9', true],
  ['chamfer', 'Chamfer4'],
  ['end', 'End of Part'],
]

const Quick = ({ icon, label }) => <QuickButton aria-label={label}>{quickIcons[icon]}</QuickButton>
const QuickMenu = ({ label }) => <QuickButton $narrow aria-label={label}><Arrow color="#444" /></QuickButton>

const Big = ({ icon, label, width, menu, ...rest }) => (
  <BigTool $width={width} {...rest}>
    <BigIcon name={icon} />
    <BigLabel>{label}</BigLabel>
    {menu && <Arrow />}
  </BigTool>
)

const Small = ({ icon, label, menu }) => (
  <SmallTool><SmallIcon name={icon} /><span>{label}</span>{menu && <Arrow />}</SmallTool>
)

const TopBar = () => (
  <Header>
    <AppButton aria-label="Application menu"><InvLogo /></AppButton>
    <HeaderRows>
      <TitleBar>
        <QuickAccess>
          <Quick icon="new" label="New" />
          <QuickMenu label="New options" />
          <Quick icon="open" label="Open" />
          <Quick icon="save" label="Save" />
          <Quick icon="undo" label="Undo" />
          <Quick icon="redo" label="Redo" />
          <QuickLine />
          <Quick icon="home" label="Home" />
          <Quick icon="update" label="Update" />
          <QuickMenu label="Update options" />
          <Quick icon="pick" label="Select" />
          <QuickMenu label="Select options" />
          <Quick icon="ball" label="Material" />
          <ComboBox>
            <select aria-label="Material"><option>Generic</option></select>
            <ComboArrow />
          </ComboBox>
          <QuickButton aria-label="Appearance browser"><Wheel /></QuickButton>
          <ComboBox $swatch>
            <svg width="16" height="17" viewBox="0 0 16 17"><path d="M0 0h16v17H0z" fill="#8a8a8a" /><circle cx="8" cy="8.500" r="6.500" fill="#b5b5b5" /><circle cx="6" cy="6" r="2.500" fill="#eee" /></svg>
            <select aria-label="Appearance"><option>Default</option></select>
            <ComboArrow />
          </ComboBox>
          <QuickButton aria-label="Adjust"><Wheel mark="down" /></QuickButton>
          <QuickButton aria-label="Clear"><Wheel mark="x" /></QuickButton>
          <QuickButton aria-label="Parameters">
            <Svg16><path d="M10 1.500C8 .5 7.300 2 7 4L5 12.500c-.4 2-1.500 2.500-3 2M4 6h6" stroke="#222" strokeWidth="1.300" /><path d="M9.500 10l4 4.500M14 10l-5 4.500" stroke="#222" /></Svg16>
          </QuickButton>
          <Quick icon="plus" label="Add" />
          <QuickButton $narrow aria-label="Customize">{quickIcons.more}</QuickButton>
        </QuickAccess>
        <AppTitle>
          <span>Autodesk Inventor Professional 2015 - STUDENT VERSION</span>
          <span>monitor VESA plate</span>
        </AppTitle>
        <InfoCenter>
          <svg width="9" height="10" viewBox="0 0 9 10"><path d="M2 1v8l4-4z" fill="#444" /></svg>
          <SearchBox type="text" aria-label="Search" />
          <QuickButton aria-label="Subscription"><Glyph kind="key" /></QuickButton>
          <QuickButton aria-label="Communication"><Glyph kind="dish" /></QuickButton>
          <QuickButton aria-label="Favorites"><Glyph kind="star" /></QuickButton>
          <QuickButton aria-label="Account"><Glyph kind="user" /></QuickButton>
          <SignIn>Sign In <Arrow color="#555" /></SignIn>
          <QuickButton aria-label="Exchange"><Glyph kind="x" /></QuickButton>
          <QuickLine $wide />
          <QuickButton aria-label="Help"><Glyph kind="help" /></QuickButton>
          <QuickMenu label="Help options" />
        </InfoCenter>
        <WindowButtons>
          <WindowButton aria-label="Minimize"><svg width="10" height="10" viewBox="0 0 10 10"><path d="M1 7h8v2H1z" fill="#222" /></svg></WindowButton>
          <WindowButton aria-label="Restore"><svg width="12" height="11" viewBox="0 0 12 11" fill="none"><path d="M1.500 3.500h7v6h-7z" stroke="#222" /><path d="M1 3h8M3 .5h8.500V8" stroke="#222" /></svg></WindowButton>
          <CloseButton aria-label="Close"><svg width="9" height="9" viewBox="0 0 9 9"><path d="M1 1l7 7M8 1L1 8" stroke="#fff" strokeWidth="1.800" /></svg></CloseButton>
        </WindowButtons>
      </TitleBar>
      <TabRow>
        {tabs.map((tab, i) => <RibbonTab key={tab} href="#" $active={i === 0}>{tab}</RibbonTab>)}
        <TabTools aria-label="Minimize ribbon">
          <svg width="13" height="7" viewBox="0 0 13 7"><rect width="13" height="7" rx="2" fill="#eee" /><path d="M4 5h5L6.500 2z" fill="#333" /></svg>
          <Arrow w={4} color="#ddd" />
        </TabTools>
      </TabRow>
    </HeaderRows>
  </Header>
)

const RibbonBar = () => (
  <Ribbon>
    <Panel $width={79}>
      <PanelBody>
        <BigTool $width={78}>
          <BigIcon name="sketch" />
          <BigLabel $side><span>Start<br />2D Sketch</span><Arrow w={4} /></BigLabel>
        </BigTool>
      </PanelBody>
      <PanelTitle>Sketch</PanelTitle>
    </Panel>
    <Panel $width={153}>
      <PanelBody $indent={1}>
        <Big icon="extrude" label="Extrude" width={46} />
        <Big icon="revolve" label="Revolve" width={47} />
        <Big icon="sweep" label="Sweep" width={54} menu />
      </PanelBody>
      <PanelTitle>Create <Arrow w={8} /></PanelTitle>
    </Panel>
    <Panel $width={266}>
      <PanelBody>
        <Big icon="hole" label="Hole" width={49} menu />
        <Big icon="fillet" label="Fillet" width={47} menu />
        <Big icon="shell" label="Shell" width={47} menu />
        <Big icon="combine" label="Combine" width={71} menu />
        <ToolLine $gap={4} />
        <Big icon="direct" label="Direct" width={41} />
      </PanelBody>
      <PanelTitle>Modify <Arrow w={8} /></PanelTitle>
    </Panel>
    <Panel $width={127}>
      <PanelBody $indent={2}>
        <Big icon="plane" label="Plane" width={50} menu />
        <PanelBody $indent={5}>
          <SmallTools>
            <Small icon="axis" label="Axis" menu />
            <Small icon="point" label="Point" menu />
            <Small icon="ucs" label="UCS" />
          </SmallTools>
        </PanelBody>
      </PanelBody>
      <PanelTitle>Work Features</PanelTitle>
    </Panel>
    <Panel $width={98}>
      <PanelBody $indent={6}>
        <SmallTools>
          <Small icon="rect" label="Rectangular" />
          <Small icon="circ" label="Circular" />
          <Small icon="mirror" label="Mirror" />
        </SmallTools>
      </PanelBody>
      <PanelTitle>Pattern</PanelTitle>
    </Panel>
    <Panel $width={79}>
      <PanelBody $indent={7}>
        <SmallTools>
          <Small icon="stitch" label="Stitch" />
          <Small icon="patch" label="Patch" menu />
          <Small icon="trim" label="Trim" />
        </SmallTools>
      </PanelBody>
      <PanelTitle>Surface <Arrow w={8} /></PanelTitle>
    </Panel>
    <Panel $width={143}>
      <PanelBody $indent={1}>
        <Big icon="box" label="Box" width={43} menu />
        <ToolLine $gap={3} />
        <BigTool $width={55} disabled>
          <BigIcon name="edit" />
          <BigLabel $side><span>Edit<br />Form</span><Arrow w={4} color="#aaa" /></BigLabel>
        </BigTool>
        <ToolLine $gap={1} />
        <BoxTool $width={24} $left={6} aria-label="Convert" disabled>
          <Svg16><ellipse cx="4" cy="3" rx="3.500" ry="2" stroke="#bbb" /><path d="M.5 3v5c1 2 6 2 7 0V3M8.500 10v4c1 2 6 2 7 0v-4M11 2h3v4M2 11v3h3" stroke="#bbb" /><ellipse cx="12" cy="10" rx="3.500" ry="2" stroke="#bbb" /></Svg16>
        </BoxTool>
      </PanelBody>
      <PanelTitle>Freeform</PanelTitle>
    </Panel>
    <Panel $width={40}>
      <PanelBody>
        <BoxTool $width={35} $left={3} aria-label="Panel options">
          <Svg16><circle cx="8" cy="8" r="7" fill="#d9dde6" stroke="#333" /><path d="M3.500 5.500h9L8 12z" fill="#1b2a4a" /></Svg16>
          <Arrow w={4} />
        </BoxTool>
      </PanelBody>
      <PanelTitle />
    </Panel>
  </Ribbon>
)

const ModelBrowser = () => (
  <Browser>
    <Grip><button aria-label="Close browser"><svg width="7" height="7" viewBox="0 0 7 7"><path d="M.5 .5l6 6M6.500 .5l-6 6" stroke="#000" strokeWidth="1.600" /></svg></button></Grip>
    <BrowserHead>
      <BrowserMenu>Model <Arrow w={8} color="#fff" /></BrowserMenu>
      <button aria-label="Browser help">
        <svg width="14" height="16" viewBox="0 0 14 16"><path d="M1 1h12v12h-3l-2 2-1-2H1z" fill="#ffffb4" stroke="#000" /><path d="M4.500 5c0-3.500 5-3 4.800 0C9.200 7 7 7 7 9M7 10v2" fill="none" stroke="#0a1c8c" strokeWidth="1.800" /></svg>
      </button>
    </BrowserHead>
    <BrowserTools>
      <button aria-label="Filter"><svg width="14" height="12" viewBox="0 0 14 12"><path d="M.5 .5h13L9 6v5.500L5.500 10V6z" fill="#8c8c8c" stroke="#222" /></svg></button>
      <i />
      <button aria-label="Find"><svg width="16" height="14" viewBox="0 0 16 14"><path d="M3 1h3v2h1v2h2V3h1V1h3v2l3 7v4h-6V9H6v5H0v-4l3-7z" fill="#111" /><path d="M2 10v2M11.500 10v2" stroke="#fff" /></svg></button>
    </BrowserTools>
    <Tree>
      <TreeRow $root><TreeIcon name="part" />monitor VESA plate</TreeRow>
      {tree.map(([icon, label, plus], i) => (
        <TreeRow key={label}>
          <Branch plus={plus} last={i === tree.length - 1} />
          <TreeIcon name={icon} />
          {label}
        </TreeRow>
      ))}
    </Tree>
  </Browser>
)

const ViewNav = () => (
  <NavBar>
    <NavButton $height={13} $end aria-label="Close navigation bar"><svg width="9" height="9" viewBox="0 0 9 9"><circle cx="4.500" cy="4.500" r="4.500" fill="#4e4e4e" /><path d="M2.500 2.500l4 4M6.500 2.500l-4 4" stroke="#ccc" /></svg></NavButton>
    <NavButton $height={38} aria-label="Steering wheel">
      <svg width="22" height="22" viewBox="0 0 22 22" fill="none"><path d="M11 1h10v10A10 10 0 1 1 11 1z" fill="#bcbec1" stroke="#55585c" /><circle cx="11" cy="11" r="6" stroke="#55585c" /><path d="M6.500 15l-3 3M15.500 15l3 3" stroke="#55585c" /></svg>
    </NavButton>
    <NavButton $height={6} aria-label="Wheel options"><Arrow color="#555" /></NavButton>
    <hr />
    <NavButton aria-label="Pan">
      <Svg16><path d="M5 15L1 9l1-1 2.500 2L3 3.500 4.500 3 6.500 8V1.500h1.500L8.500 8l1-6.500 1.500.3L10.800 8l1.700-4.500 1.500.5-1.500 7L11 15z" fill="#cfd1d3" stroke="#55585c" strokeWidth=".7" /></Svg16>
    </NavButton>
    <NavButton aria-label="Zoom">
      <Svg16><path d="M10 10l5 5" stroke="#606366" strokeWidth="2.500" /><circle cx="6.500" cy="6.500" r="5.500" fill="#c5c9cb" stroke="#55585c" /><path d="M4 4h5v5H4z" fill="#a9adb0" stroke="#606366" /></Svg16>
    </NavButton>
    <NavButton $height={10} aria-label="Zoom options"><Arrow color="#555" /></NavButton>
    <NavButton aria-label="Orbit">
      <Svg16><ellipse cx="7.500" cy="8" rx="3.300" ry="7.500" stroke="#5a5c5f" /><path d="M12 4.500c5 2 4 6-2 6.500M5 11C-1 10-1 6 4 5M8 6v4M6 8h4M12 3v4M10 5h4" stroke="#5a5c5f" /></Svg16>
    </NavButton>
    <NavButton $height={10} aria-label="Orbit options"><Arrow color="#555" /></NavButton>
    <NavButton aria-label="Look at">
      <Svg16><path d="M1 5.500L14 1l-1 4" stroke="#8f9193" /><path d="M.5 5.500h15v9H.5z" fill="#c4c6c8" stroke="#55585c" /><path d="M4 8.500h8v3H4z" stroke="#55585c" /></Svg16>
    </NavButton>
    <NavButton $height={18} $end aria-label="Customize"><svg width="9" height="9" viewBox="0 0 9 9"><circle cx="4.500" cy="4.500" r="4.500" fill="#4e4e4e" /><path d="M2 3.500h5M2.500 5h4L4.500 7z" fill="#ccc" stroke="#ccc" strokeWidth=".8" /></svg></NavButton>
  </NavBar>
)

const Doc = ({ title, active, children }) => (
  <DocWindow $active={active}>
    <DocTitle>
      <Svg16>{treeIcons.part}</Svg16>
      <h2>{title}</h2>
      <DocButton $dark={active} aria-label="Minimize"><MinIcon /></DocButton>
      <DocButton $dark={active} aria-label="Maximize"><MaxIcon /></DocButton>
      <DocButton $red={active} aria-label="Close"><XIcon /></DocButton>
    </DocTitle>
    <Viewport>
      {children}
      <Overlay $place="top: 26px; right: 26px;"><ViewCube /></Overlay>
      <Overlay $place="left: 46px; bottom: 29px;"><Triad /></Overlay>
      {active && <ViewNav />}
    </Viewport>
  </DocWindow>
)

class App extends Component {
  render() {
    return (
      <Page>
        <GlobalStyle />
        <TopBar />
        <RibbonBar />
        <Work>
          <ModelBrowser />
          <Documents>
            <Mdi>
              <LeftStack>
                <Doc title="wall VESA plate"><WallPlate /></Doc>
                <PeekWindow>
                  <svg width="14" height="5" viewBox="0 0 14 5"><path d="M.5 0v4.500h6V0M7.500 0v4.500h6V0" fill="#fff" stroke="#222" /></svg>
                  <span>Pr...</span><i /><i /><i />
                </PeekWindow>
              </LeftStack>
              <Doc title="monitor VESA plate" active><MonitorPlate /></Doc>
            </Mdi>
            <DocTabs>
              <LayoutButton aria-label="Cascade"><svg width="16" height="16" viewBox="0 0 16 16" fill="#eee" stroke="#333"><path d="M.5 1.500h11v7H.5zM2.500 4.500h11v7h-11zM4.500 7.500h11v7h-11z" /><path d="M.5 2.500h11M2.500 5.500h11M4.500 8.500h11" /></svg></LayoutButton>
              <LayoutButton aria-label="Tile"><svg width="16" height="14" viewBox="0 0 16 14" fill="#eee" stroke="#333"><path d="M1.500 1.500h5v4h-5zM9.500 1.500h5v4h-5zM1.500 8.500h5v4h-5zM9.500 8.500h5v4h-5z" /></svg></LayoutButton>
              <LayoutButton aria-label="List documents"><svg width="8" height="12" viewBox="0 0 8 12"><path d="M0 5l4-4 4 4z" fill="#333" /></svg></LayoutButton>
              <DocTab href="#">My Home</DocTab>
              <DocTab href="#">wall VESA plate.ipt</DocTab>
              <DocTab href="#" $active>monitor VESA pla...ipt <svg width="7" height="7" viewBox="0 0 7 7"><path d="M.5 .5h6v6h-6zM1 1l5 5M6 1L1 6" fill="none" stroke="#666" /></svg></DocTab>
            </DocTabs>
          </Documents>
        </Work>
        <StatusBar><span>Ready</span><b>1</b><b>2</b></StatusBar>
      </Page>
    );
  }
}

export default App;
